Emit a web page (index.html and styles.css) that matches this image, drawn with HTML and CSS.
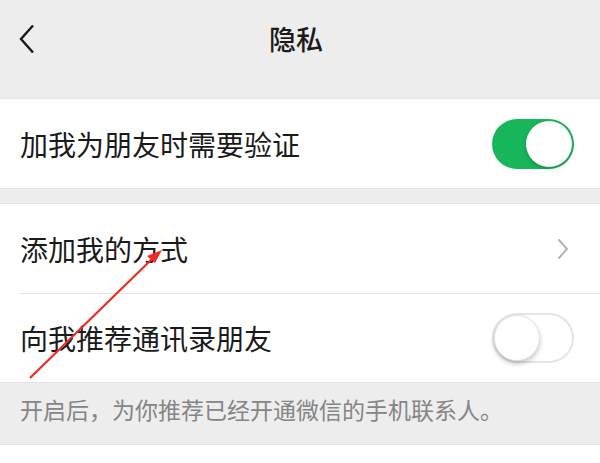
FILE: index.html
```html
<!DOCTYPE html>
<html lang="zh-CN">
<head>
<meta charset="utf-8">
<title>隐私</title>
<link rel="stylesheet" href="styles.css">
</head>
<body>
<div class="page">
  <header class="nav">
    <svg class="back" width="16" height="30" viewBox="0 0 16 30"><path d="M14 1.5 L2 15 L14 28.5" fill="none" stroke="#1a1a1a" stroke-width="2.4"/></svg>
    <h1 class="title">隐私</h1>
  </header>
  <section class="group">
    <div class="cell">
      <span class="label">加我为朋友时需要验证</span>
      <span class="switch on"><span class="knob"></span></span>
    </div>
  </section>
  <section class="group">
    <div class="cell">
      <span class="label">添加我的方式</span>
      <svg class="arrow" width="12" height="22" viewBox="0 0 12 22"><path d="M1.5 1.5 L10 11 L1.5 20.5" fill="none" stroke="#b4b4b4" stroke-width="2"/></svg>
    </div>
    <div class="cell divided">
      <span class="label">向我推荐通讯录朋友</span>
      <span class="switch off"><span class="knob"></span></span>
    </div>
  </section>
  <p class="hint">开启后，为你推荐已经开通微信的手机联系人。</p>
  <section class="group tail"></section>
  <svg class="annot" width="600" height="463" viewBox="0 0 600 463">
    <line x1="30" y1="378" x2="152" y2="259" stroke="#ee2a24" stroke-width="2.2"/>
    <polygon points="162,250 147,256 155,263" fill="#ee2a24"/>
  </svg>
</div>
</body>
</html>
```
FILE: styles.css
```css
* { box-sizing: border-box; margin: 0; padding: 0; }
html, body { width: 600px; height: 463px; overflow: hidden; }
body {
  background: #ededed;
  font-family: "Noto Sans CJK SC", "Noto Sans", sans-serif;
  color: #1a1a1a;
}
.page { position: relative; width: 600px; height: 463px; }
.nav {
  height: 98px;
  display: flex;
  align-items: flex-start;
  justify-content: center;
  position: relative;
  padding: 19px 8px 0 0;
}
.back { position: absolute; left: 19px; top: 24px; }
.title {
  font-size: 27px;
  font-weight: 500;
  line-height: 40px;
  color: #1a1a1a;
}
.group {
  background: #fff;
  border-top: 1px solid #e3e3e3;
  border-bottom: 1px solid #e3e3e3;
  margin-bottom: 14px;
}
.cell {
  height: 89px;
  display: flex;
  align-items: center;
  justify-content: space-between;
  padding: 0 26px 0 20px;
  position: relative;
}
.divided::before {
  content: "";
  position: absolute;
  left: 20px; right: 0; top: 0;
  border-top: 1px solid #e6e6e6;
}
.label { font-size: 28px; line-height: 40px; color: #1a1a1a; }
.arrow { margin-right: 5px; }
.switch {
  width: 82px; height: 50px;
  border-radius: 25px;
  position: relative;
  display: block;
}
.switch.on { background: #17b65b; }
.switch.off { background: #fff; border: 2px solid #e5e5e5; }
.knob {
  position: absolute;
  width: 46px; height: 46px;
  border-radius: 50%;
  background: #fff;
}
.on .knob { right: 2px; top: 2px; box-shadow: 0 2px 4px rgba(0,0,0,0.2); }
.off .knob { left: 0; top: 0; box-shadow: 0 3px 5px rgba(0,0,0,0.22); border: 1px solid #e2e2e2; }
.hint {
  height: 61px;
  margin-top: -14px;
  padding: 10px 20px 0;
  font-size: 23px;
  line-height: 32px;
  color: #858585;
}
.group.tail { height: 40px; border-bottom: none; margin: 0; }
.annot { position: absolute; left: 0; top: 0; pointer-events: none; }
```
